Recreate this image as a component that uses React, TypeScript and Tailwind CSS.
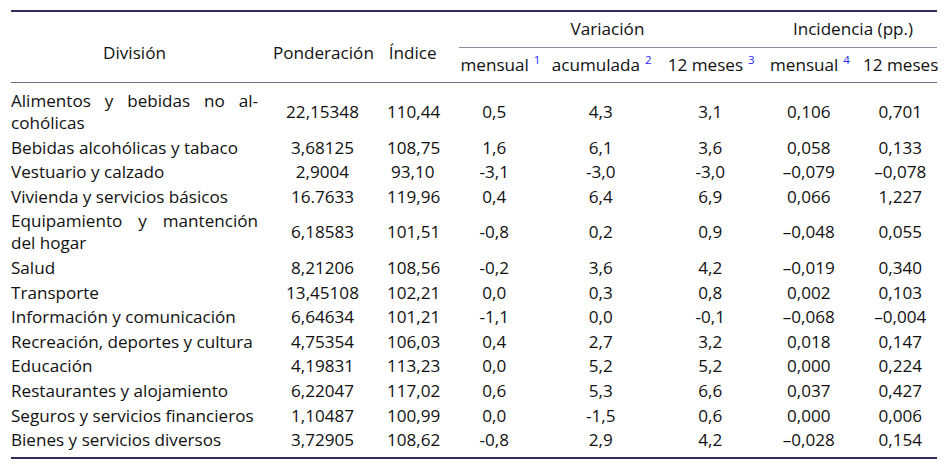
import React from 'react';

type Row = {
  name: string[];
  pond: string;
  indice: string;
  vals: string[];
};

const ROWS: Row[] = [
  { name: ['Alimentos y bebidas no al-', 'cohólicas'], pond: '22,15348', indice: '110,44', vals: ['0,5', '4,3', '3,1', '0,106', '0,701'] },
  { name: ['Bebidas alcohólicas y tabaco'], pond: '3,68125', indice: '108,75', vals: ['1,6', '6,1', '3,6', '0,058', '0,133'] },
  { name: ['Vestuario y calzado'], pond: '2,9004', indice: '93,10', vals: ['-3,1', '-3,0', '-3,0', '–0,079', '–0,078'] },
  { name: ['Vivienda y servicios básicos'], pond: '16.7633', indice: '119,96', vals: ['0,4', '6,4', '6,9', '0,066', '1,227'] },
  { name: ['Equipamiento y mantención', 'del hogar'], pond: '6,18583', indice: '101,51', vals: ['-0,8', '0,2', '0,9', '–0,048', '0,055'] },
  { name: ['Salud'], pond: '8,21206', indice: '108,56', vals: ['-0,2', '3,6', '4,2', '–0,019', '0,340'] },
  { name: ['Transporte'], pond: '13,45108', indice: '102,21', vals: ['0,0', '0,3', '0,8', '0,002', '0,103'] },
  { name: ['Información y comunicación'], pond: '6,64634', indice: '101,21', vals: ['-1,1', '0,0', '-0,1', '–0,068', '–0,004'] },
  { name: ['Recreación, deportes y cultura'], pond: '4,75354', indice: '106,03', vals: ['0,4', '2,7', '3,2', '0,018', '0,147'] },
  { name: ['Educación'], pond: '4,19831', indice: '113,23', vals: ['0,0', '5,2', '5,2', '0,000', '0,224'] },
  { name: ['Restaurantes y alojamiento'], pond: '6,22047', indice: '117,02', vals: ['0,6', '5,3', '6,6', '0,037', '0,427'] },
  { name: ['Seguros y servicios financieros'], pond: '1,10487', indice: '100,99', vals: ['0,0', '-1,5', '0,6', '0,000', '0,006'] },
  { name: ['Bienes y servicios diversos'], pond: '3,72905', indice: '108,62', vals: ['-0,8', '2,9', '4,2', '–0,028', '0,154'] },
];

const GRID = 'grid grid-cols-[254.5px_114px_66.5px_96.5px_116.5px_102.5px_94.5px_81px]';

const Sup = ({ n }: { n: number }) => (
  <sup className="ml-[5px] text-[11.5px] text-[#1f1fff] relative -top-[7px]">{n}</sup>
);

export default function App() {
  return (
    <div className="w-[950px] h-[468px] bg-white pl-[11px] pt-[10px] text-[17.1px] text-[#111] font-['Open_Sans',sans-serif]">
      <div className="w-[926px]">
        {/* top rule */}
        <div className="h-[2px] bg-[#2e2f5c]" />

        {/* header */}
        <div className={`${GRID} leading-[22px] pb-[5.5px]`}>
          <div className="row-span-2 pt-[30px] pr-[7.5px] text-center">División</div>
          <div className="row-span-2 pt-[30px] px-[7.5px] text-center">Ponderación</div>
          <div className="row-span-2 pt-[30px] px-[7.5px] text-center">Índice</div>
          <div className="col-span-3 pt-[6px] pl-[7.5px] text-center">Variación</div>
          <div className="col-span-2 pt-[6px] pl-[7.5px] text-center">Incidencia (pp.)</div>
          <div className="col-span-5 pl-[13px] mt-[6.5px]">
            <div className="h-px bg-[#8a8aa0]" />
            <div className="grid grid-cols-[90.5px_116.5px_102.5px_94.5px_81px] -ml-[6px] mt-[6.5px]">
              <div className="text-center px-[7.5px] whitespace-nowrap">mensual<Sup n={1} /></div>
              <div className="text-center px-[7.5px] whitespace-nowrap">acumulada<Sup n={2} /></div>
              <div className="text-center px-[7.5px] whitespace-nowrap">12 meses<Sup n={3} /></div>
              <div className="text-center px-[7.5px] whitespace-nowrap">mensual<Sup n={4} /></div>
              <div className="text-center pl-[6px] whitespace-nowrap">12 meses</div>
            </div>
          </div>
        </div>
        <div className="h-[1.5px] bg-[#6f7090]" />

        {/* body */}
        <div className="pt-[5.7px] pb-[5px] leading-[22px]">
          {ROWS.map((r) => (
            <div key={r.name.join(' ')} className={`${GRID} items-center py-[1.3px]`}>
              <div className="pr-[7.5px]">
                {r.name.length > 1 ? (
                  <>
                    <div className="text-justify [text-align-last:justify]">{r.name[0]}</div>
                    <div>{r.name[1]}</div>
                  </>
                ) : (
                  <div className="whitespace-nowrap">{r.name[0]}</div>
                )}
              </div>
              <div className="px-[7.5px] text-center">{r.pond}</div>
              <div className="px-[7.5px] text-center">{r.indice}</div>
              {r.vals.map((v, i) => (
                <div key={i} className={`text-center ${i === 4 ? 'pl-[7.5px]' : 'px-[7.5px]'}`}>{v}</div>
              ))}
            </div>
          ))}
        </div>

        {/* bottom rule */}
        <div className="h-[2px] bg-[#2e2f5c]" />
      </div>
    </div>
  );
}
